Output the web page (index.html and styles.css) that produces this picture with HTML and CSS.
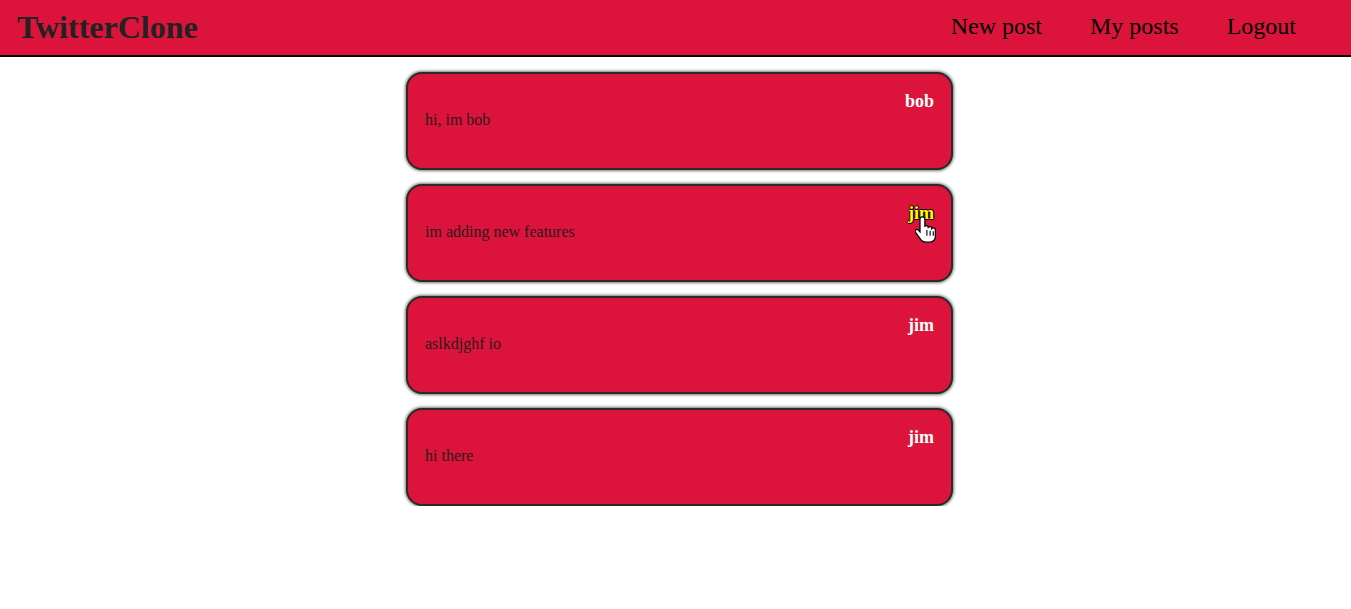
FILE: index.html
```html
<!DOCTYPE html>
<html>
<head>
<meta charset="utf-8">
<title>TwitterClone</title>
<link rel="stylesheet" href="styles.css">
</head>
<body>
<header class="topbar">
  <div class="brand">TwitterClone</div>
  <nav class="nav">
    <a class="nav-link" href="#">New post</a>
    <a class="nav-link" href="#">My posts</a>
    <a class="nav-link" href="#">Logout</a>
  </nav>
</header>
<main class="feed">
  <article class="post">
    <div class="author">bob</div>
    <p class="body">hi, im bob</p>
  </article>
  <article class="post">
    <div class="author author-hover">jim
      <svg class="cursor" width="23" height="30" viewBox="0 0 18 24"><path d="M5.5 1.5c-1 0-1.7.8-1.7 1.7v10.3l-1.3-1.4c-.7-.7-1.8-.7-2.3.1-.5.6-.3 1.4.2 2l4.2 5.6c.9 1.2 2.3 1.9 3.8 1.9h3.3c2.4 0 4.4-2 4.4-4.4v-5.5c0-.9-.7-1.6-1.6-1.6-.5 0-.9.2-1.2.6 0-.9-.7-1.6-1.6-1.6-.5 0-1 .3-1.3.7-.1-.8-.8-1.4-1.6-1.4-.4 0-.8.2-1.1.4V3.2c0-.9-.8-1.7-1.7-1.7z" fill="#fff" stroke="#000" stroke-width="1"/><path d="M9.3 12v4.5M11.9 12.5v4M14.4 13v3.5" stroke="#000" stroke-width="0.9"/></svg>
    </div>
    <p class="body">im adding new features</p>
  </article>
  <article class="post">
    <div class="author">jim</div>
    <p class="body">aslkdjghf io</p>
  </article>
  <article class="post">
    <div class="author">jim</div>
    <p class="body">hi there</p>
  </article>
</main>
</body>
</html>
```
FILE: styles.css
```css
html, body {
  margin: 0;
  padding: 0;
  background: #ffffff;
  font-family: "Liberation Serif", "Times New Roman", serif;
}

.topbar {
  display: flex;
  align-items: center;
  justify-content: space-between;
  height: 55px;
  background: #dc143c;
  border-bottom: 2px solid #000;
  padding: 0 55px 0 17px;
}

.brand {
  font-size: 32px;
  font-weight: bold;
  color: #222222;
}

.nav {
  display: flex;
  gap: 48px;
  align-items: center;
  margin-top: -2px;
}

.nav-link {
  font-size: 24px;
  color: #000;
  text-decoration: none;
}

.feed {
  display: flex;
  flex-direction: column;
  align-items: center;
  gap: 14px;
  padding: 15px 0 0 8px;
}

.post {
  box-sizing: border-box;
  width: 547px;
  height: 98px;
  background: #dc143c;
  border: 2px solid #2a2a2a;
  border-radius: 16px;
  box-shadow: 0 0 3px 1px rgba(0, 0, 0, 0.55);
  padding: 18px 17px 0 17px;
  display: flex;
  flex-direction: column;
}

.author {
  position: relative;
  align-self: flex-end;
  font-size: 18px;
  font-weight: bold;
  color: #ffffff;
  line-height: 19px;
}

.author-hover {
  color: #ffff00;
  text-shadow: -1px 0 #000, 1px 0 #000, 0 -1px #000, 0 1px #000;
}

.cursor {
  position: absolute;
  left: 7px;
  top: 11px;
}

.body {
  margin: 0;
  font-size: 16px;
  line-height: 18px;
  color: #2a1a1a;
}
```
